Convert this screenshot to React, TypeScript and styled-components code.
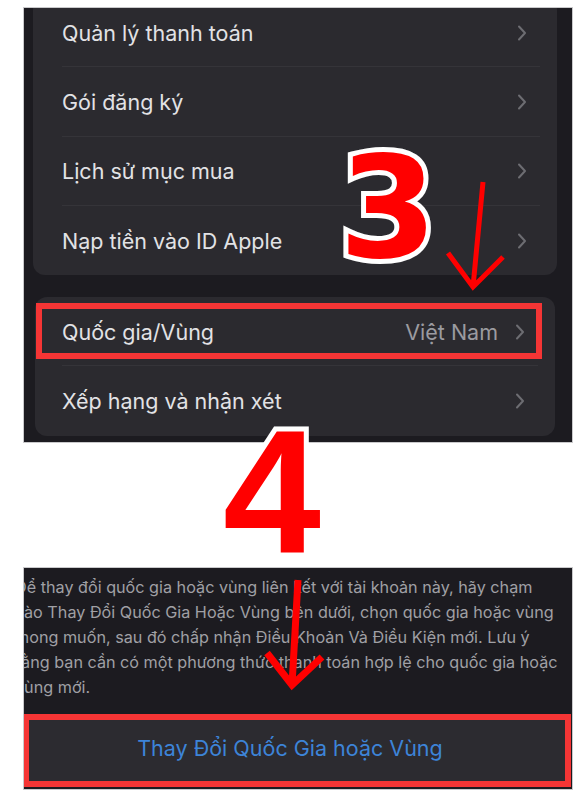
import React from "react";
import styled, { createGlobalStyle } from "styled-components";

const GlobalStyle = createGlobalStyle`
  html, body { margin: 0; padding: 0; background: #ffffff; }
  body { font-family: Inter, "Noto Sans", sans-serif; -webkit-font-smoothing: antialiased; }
`;

const Page = styled.div`
  position: relative;
  width: 586px;
  height: 800px;
  padding-top: 7px;
  box-sizing: border-box;
  background: #ffffff;
  overflow: hidden;
`;

const SettingsPanel = styled.section`
  margin-left: 23px;
  width: 550px;
  height: 436px;
  box-sizing: border-box;
  padding: 0 15px 0 9px;
  display: flex;
  flex-direction: column;
  gap: 22px;
  background: #1c1b20;
  border: 1px solid #c9c9cb;
  overflow: hidden;
`;

const Card = styled.div<{ $offsetTop?: number; $inset?: number }>`
  margin: ${(p) => p.$offsetTop ?? 0}px ${(p) => p.$inset ?? 0}px 0;
  background: #2b2a2f;
  border-radius: 12px;
  display: flex;
  flex-direction: column;
`;

const Row = styled.div<{ $padLeft: number }>`
  position: relative;
  height: 69.3px;
  flex: none;
  display: flex;
  align-items: center;
  padding: 0 30px 0 ${(p) => p.$padLeft}px;
  box-sizing: border-box;

  &:not(:last-child)::after {
    content: "";
    position: absolute;
    left: ${(p) => p.$padLeft}px;
    right: 17px;
    bottom: 0;
    height: 1px;
    background: rgba(255, 255, 255, 0.05);
  }
`;

const Label = styled.span`
  flex: 1;
  font-size: 21.5px;
  color: #e2e2e5;
  white-space: nowrap;
`;

const Value = styled.span`
  margin-right: 17px;
  font-size: 21.5px;
  color: #9b9ba0;
`;

const HighlightFrame = styled.span`
  position: absolute;
  top: 6px;
  bottom: 7px;
  left: 1px;
  right: 13px;
  border: 6px solid #f53535;
  pointer-events: none;
`;

const StepGap = styled.div`
  height: 124px;
`;

const InfoPanel = styled.section`
  margin-left: 23px;
  width: 550px;
  height: 223px;
  box-sizing: border-box;
  padding-top: 7px;
  display: flex;
  flex-direction: column;
  background: #1c1b20;
  border: 1px solid #c9c9cb;
  overflow: hidden;
`;

const InfoText = styled.p`
  margin: 0 0 0 -9px;
  font-size: 16.2px;
  line-height: 25px;
  color: #a0a0a5;
`;

const InfoLine = styled.span`
  display: block;
  white-space: nowrap;
`;

const ActionFrame = styled.div`
  margin: 14px 1px 0 -1px;
  height: 73px;
  box-sizing: border-box;
  border: 6px solid #f53535;
  display: flex;
`;

const ActionButton = styled.button`
  flex: 1;
  border: 0;
  padding: 0 14px 5px 0;
  background: #2c2b30;
  font-family: Inter, "Noto Sans", sans-serif;
  font-size: 21.5px;
  color: #3d84d8;
  cursor: pointer;
`;

const StepNumber = styled.span<{ $size: number; $family: string; $x: number; $y: number }>`
  position: absolute;
  left: ${(p) => p.$x}px;
  top: ${(p) => p.$y}px;
  font-family: ${(p) => p.$family};
  font-weight: 700;
  font-size: ${(p) => p.$size}px;
  line-height: 1;
  color: #ff0000;
  -webkit-text-stroke: 10px #ffffff;
  paint-order: stroke fill;
`;

const ArrowMark = styled.svg<{ $x: number; $y: number }>`
  position: absolute;
  left: ${(p) => p.$x}px;
  top: ${(p) => p.$y}px;
  overflow: visible;
`;

function Chevron() {
  return (
    <svg width="10" height="16" viewBox="0 0 10 16" fill="none">
      <path d="M2 1.5 L8 8 L2 14.5" stroke="#6d6d72" strokeWidth="2" strokeLinecap="round" strokeLinejoin="round" />
    </svg>
  );
}

type ArrowProps = { x: number; y: number; w: number; h: number; d: string; width: number };

function Arrow({ x, y, w, h, d, width }: ArrowProps) {
  return (
    <ArrowMark $x={x} $y={y} width={w} height={h} viewBox={`0 0 ${w} ${h}`}>
      <path d={d} stroke="#ff0000" strokeWidth={width} fill="none" strokeLinejoin="miter" />
    </ArrowMark>
  );
}

const accountRows = ["Quản lý thanh toán", "Gói đăng ký", "Lịch sử mục mua", "Nạp tiền vào ID Apple"];

const infoLines = [
  "Để thay đổi quốc gia hoặc vùng liên kết với tài khoản này, hãy chạm",
  "vào Thay Đổi Quốc Gia Hoặc Vùng bên dưới, chọn quốc gia hoặc vùng",
  "mong muốn, sau đó chấp nhận Điều Khoản Và Điều Kiện mới. Lưu ý",
  "rằng bạn cần có một phương thức thanh toán hợp lệ cho quốc gia hoặc",
  "vùng mới.",
];

export default function App() {
  return (
    <>
      <GlobalStyle />
      <Page>
        <SettingsPanel>
          <Card $offsetTop={-10}>
            {accountRows.map((label) => (
              <Row key={label} $padLeft={29}>
                <Label>{label}</Label>
                <Chevron />
              </Row>
            ))}
          </Card>
          <Card $inset={2}>
            <Row $padLeft={27}>
              <Label>Quốc gia/Vùng</Label>
              <Value>Việt Nam</Value>
              <Chevron />
              <HighlightFrame />
            </Row>
            <Row $padLeft={27}>
              <Label>Xếp hạng và nhận xét</Label>
              <Chevron />
            </Row>
          </Card>
        </SettingsPanel>

        <StepGap />

        <InfoPanel>
          <InfoText>
            {infoLines.map((line) => (
              <InfoLine key={line}>{line}</InfoLine>
            ))}
          </InfoText>
          <ActionFrame>
            <ActionButton>Thay Đổi Quốc Gia hoặc Vùng</ActionButton>
          </ActionFrame>
        </InfoPanel>

        <StepNumber $size={141} $family={'"DejaVu Sans", sans-serif'} $x={339} $y={138}>
          3
        </StepNumber>
        <StepNumber $size={176} $family={'"Liberation Sans", Arial, sans-serif'} $x={223} $y={404}>
          4
        </StepNumber>

        <Arrow x={440} y={175} w={70} h={120} width={5} d="M43 7 L33 112 M8 78 L33 112 L63 82" />
        <Arrow x={260} y={575} w={70} h={120} width={7} d="M38 5 L32 110 M7 78 L32 110 L62 82" />
      </Page>
    </>
  );
}
